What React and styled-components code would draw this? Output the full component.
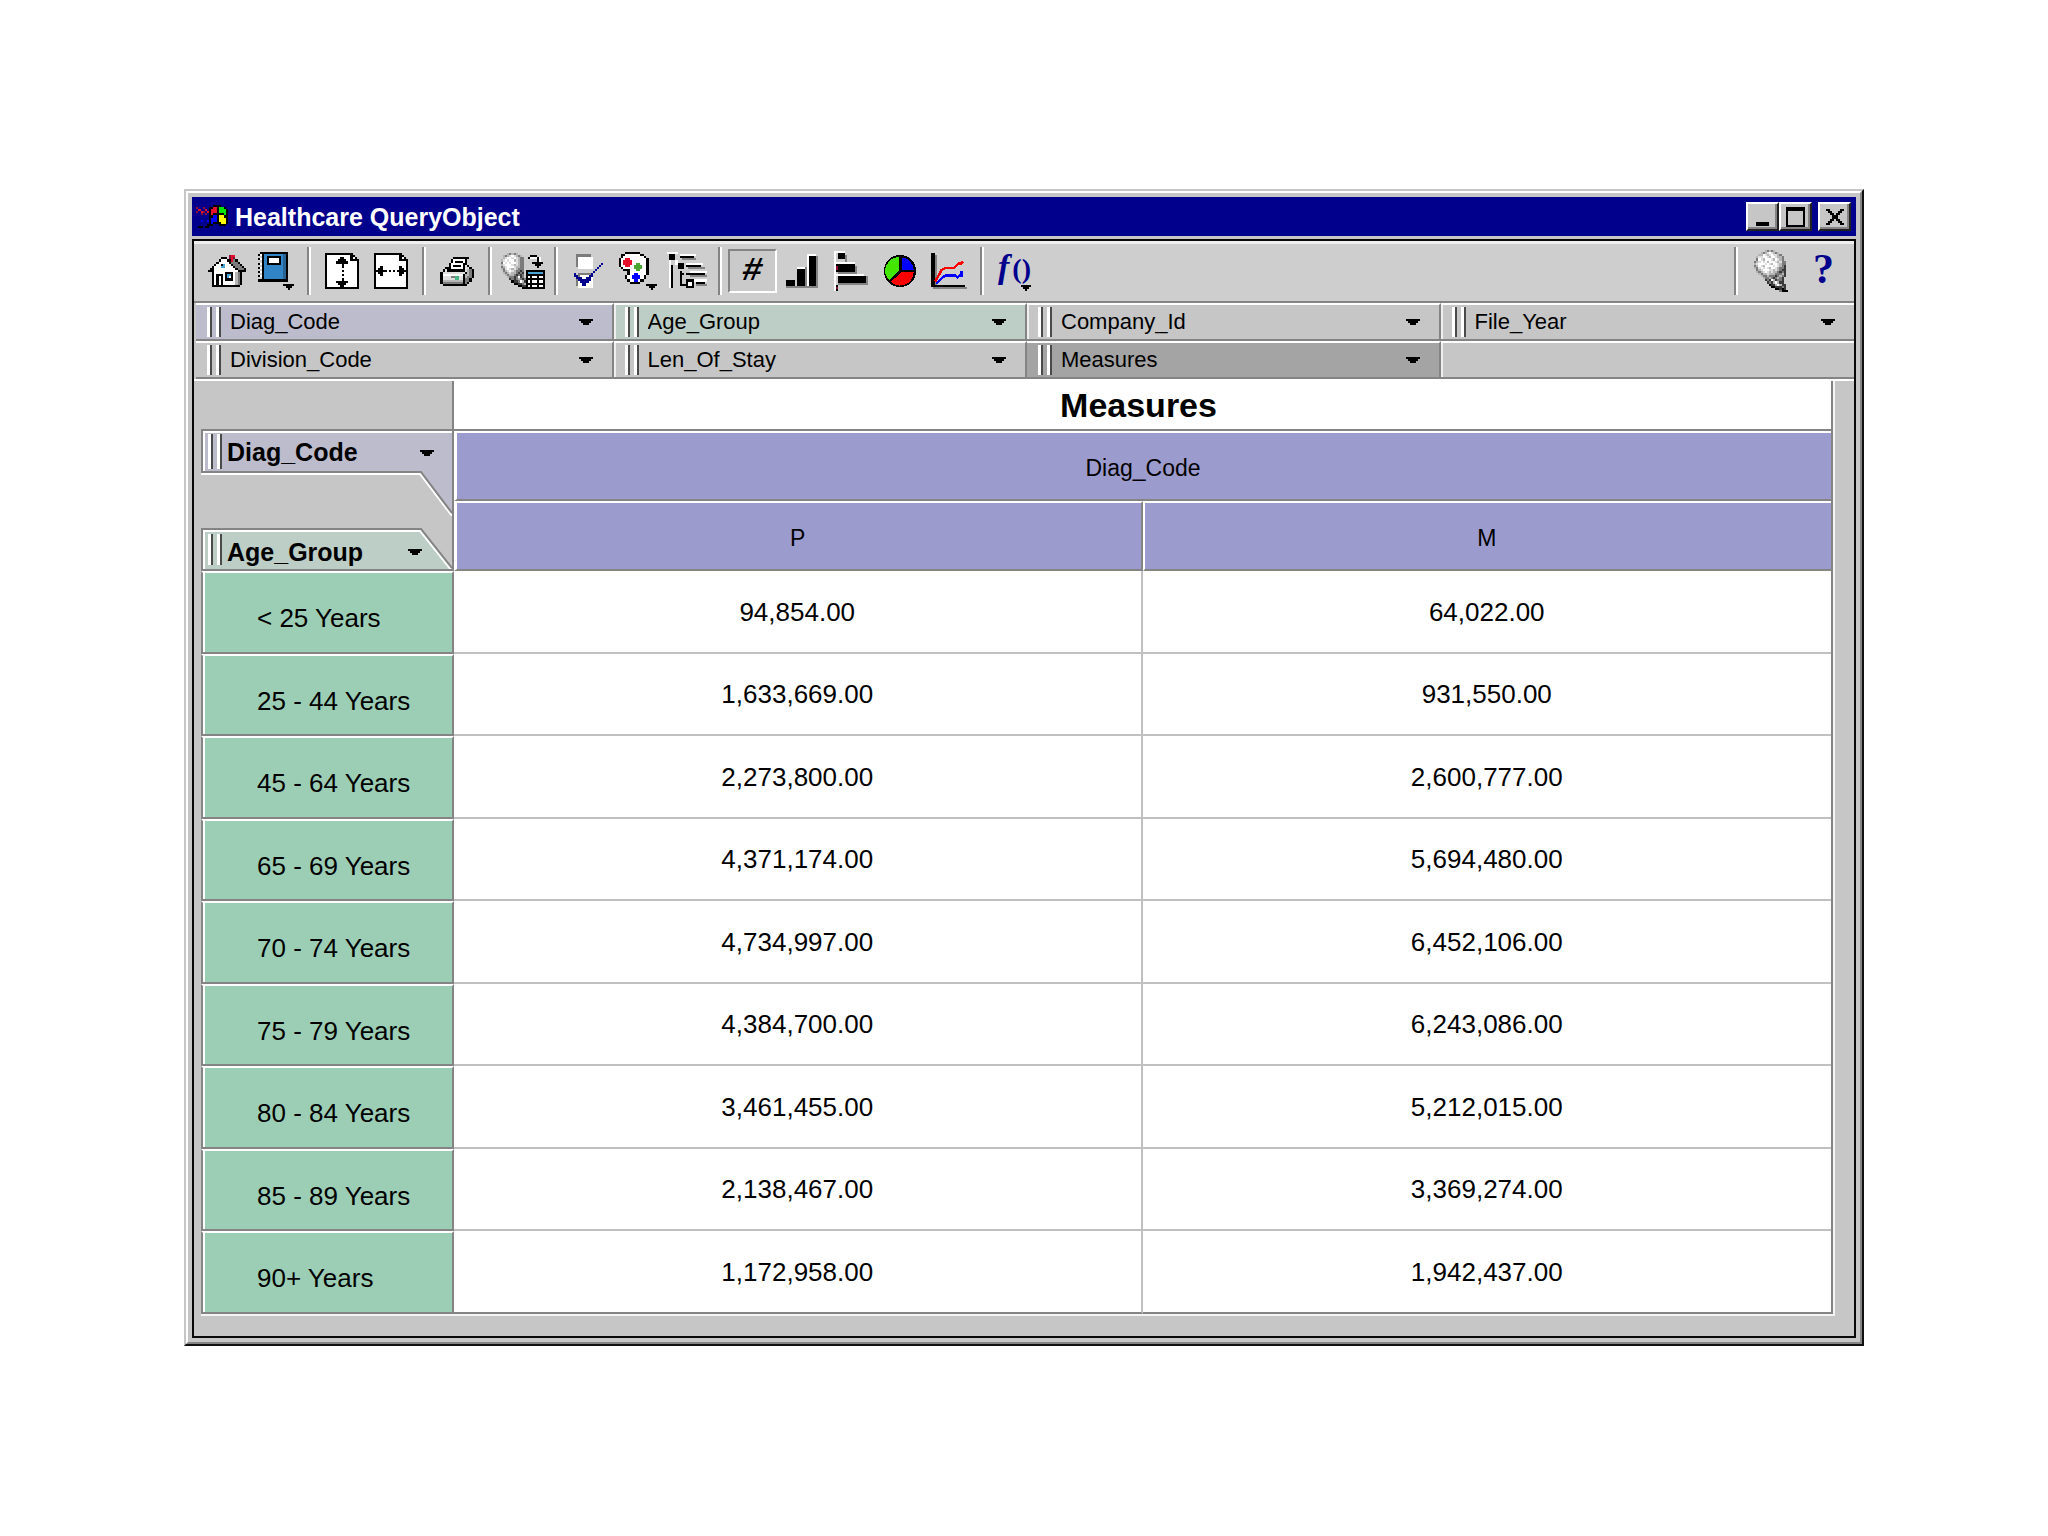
import React, { useState } from 'react';
import styled, { createGlobalStyle, css } from 'styled-components';

const GlobalStyle = createGlobalStyle`
  *, *::before, *::after {
    box-sizing: border-box;
  }

  body {
    margin: 0;
    background: #ffffff;
    color: #000000;
    font-family: "Liberation Sans", Arial, sans-serif;
  }

  button, select {
    font: inherit;
    color: inherit;
  }
`;

const face = '#c6c6c6';
const shadow = '#848484';
const navy = '#00008c';

const Page = styled.div`
  min-height: 100vh;
  padding: 189px 184px;
`;

// Window frame
const Window = styled.main`
  border: 2px solid;
  border-color: ${face} #101010 #101010 ${face};
`;

const Bevel = styled.div`
  border: 2px solid;
  border-color: #ffffff ${shadow} ${shadow} #ffffff;
  padding: 4px;
  background: ${face};
`;

const TitleBar = styled.header`
  display: flex;
  align-items: center;
  height: 39px;
  padding: 0 5px 0 4px;
  background: ${navy};
  color: #ffffff;
`;

const Title = styled.h1`
  flex: 1;
  margin: 0 0 0 7px;
  font-size: 25px;
  line-height: 30px;
  font-weight: bold;
`;

const WindowButton = styled.button`
  display: flex;
  align-items: center;
  justify-content: center;
  width: 33px;
  height: 29px;
  padding: 0;
  border: 2px solid;
  border-color: #ffffff #202020 #202020 #ffffff;
  background: ${face};
  box-shadow: inset -2px -2px 0 ${shadow};
  margin-left: ${props => (props.$apart ? 6 : 0)}px;
`;

const Client = styled.div`
  margin-top: 3px;
  border: 2px solid #080808;
  background: ${face};
`;

// Toolbar
const Toolbar = styled.div`
  display: flex;
  align-items: center;
  height: 62px;
  padding: 0 4px 0 8px;
  background: #cecece;
  border-bottom: 2px solid ${shadow};
  box-shadow: inset 0 3px 0 #efefef;
`;

const ToolButton = styled.button`
  display: flex;
  align-items: center;
  justify-content: center;
  width: ${props => (props.$wide ? 53 : 49)}px;
  height: 44px;
  padding: 0;
  border: 0;
  background: none;

  ${props => props.$pressed && css`
    border: 2px solid;
    border-color: ${shadow} #ffffff #ffffff ${shadow};
    background: #cacaca;
  `}
`;

const Separator = styled.span`
  width: 4px;
  height: 48px;
  margin: 0 6px 0 7px;
  border-left: 2px solid ${shadow};
  border-right: 2px solid #ffffff;
`;

const Spacer = styled.span`
  flex: 1;
`;

const Glyph = styled.span`
  position: relative;
  padding-bottom: ${props => props.$lift || 0}px;
  font-family: ${props => (props.$serif ? '"Liberation Serif", serif' : '"Liberation Mono", monospace')};
  font-style: ${props => (props.$italic ? 'italic' : 'normal')};
  font-size: ${props => props.$size}px;
  line-height: 36px;
  font-weight: bold;
  color: ${props => props.$color || '#000000'};

  svg {
    position: absolute;
    right: 0;
    bottom: 0;
  }
`;

const Parens = styled.span`
  font-size: 28px;
  font-style: normal;
  margin-left: 3px;
`;

// Dimension bar
const DimensionBar = styled.div`
  display: grid;
  grid-template-columns: calc(25% + 3px) repeat(3, 1fr);
  padding-left: 2px;
`;

const tints = {
  lavender: '#bdbccd',
  mint: '#bccec5',
  dark: '#a4a4a4',
  plain: face,
};

const Dimension = styled.div`
  display: flex;
  align-items: center;
  height: 38px;
  padding: 0 19px 0 10px;
  border-top: 2px solid #ffffff;
  border-bottom: 2px solid ${shadow};
  border-right: ${props => (props.$last ? 0 : 2)}px solid ${shadow};
  background: ${props => tints[props.$tint]};

  &:not(:nth-child(4n + 1)) {
    box-shadow: ${props => (props.$tint === 'dark' ? 'none' : 'inset 2px 0 0 #efefef')};
  }
`;

const Grip = styled.span`
  flex: none;
  width: 15px;
  height: ${props => props.$height}px;
  padding-left: 1px;
  display: flex;
  gap: 4px;

  &::before, &::after {
    content: '';
    width: 5px;
    border-left: 3px solid #ffffff;
    border-right: 2px solid #4a4a4a;
  }
`;

const Select = styled.select`
  flex: 1;
  min-width: 0;
  appearance: none;
  margin: 0;
  padding: 0;
  border: 0;
  border-radius: 0;
  background: transparent;
  font-size: ${props => (props.$bold ? 25 : 22)}px;
  font-weight: ${props => (props.$bold ? 'bold' : 'normal')};
  line-height: 30px;
  height: 30px;
  margin-left: ${props => (props.$bold ? 5 : 9)}px;
`;

// Query table
const Body = styled.div`
  padding: 0 19px 20px 7px;
  border-top: 2px solid #ffffff;
`;

const TableEdge = styled.div`
  border-right: 2px solid #f4f4f4;
  border-bottom: 2px solid #f4f4f4;
`;

const Table = styled.table`
  width: 100%;
  table-layout: fixed;
  border-spacing: 0;
  border-right: 2px solid ${shadow};
`;

const LabelCol = styled.col`
  width: 253px;
`;

const Corner = styled.td`
  padding: 0;
  border-right: 2px solid ${shadow};
  border-bottom: ${props => (props.$lined ? 2 : 0)}px solid ${shadow};
  background: ${face};
  vertical-align: top;
`;

const TableTitle = styled.th`
  height: 50px;
  padding: 0 8px 0 0;
  border-bottom: 2px solid ${shadow};
  background: #ffffff;
  font-size: 34px;
  line-height: 40px;
  font-weight: bold;
`;

const ColumnHeader = styled.th`
  height: 70px;
  padding: 4px 2px 0 0;
  border-top: 2px solid #ffffff;
  border-left: ${props => (props.$second ? 2 : 3)}px solid #ffffff;
  border-bottom: 2px solid ${shadow};
  border-right: ${props => (props.$divided ? 2 : 0)}px solid ${shadow};
  background: #9c9bce;
  font-size: 23px;
  line-height: 30px;
  font-weight: normal;
`;

const RowHeader = styled.th`
  padding: 11px 0 0 54px;
  border: 2px solid ${shadow};
  border-top-color: #ffffff;
  background: #9cceb5;
  box-shadow: inset 2px 0 0 #ffffff;
  font-size: 26px;
  line-height: 30px;
  font-weight: normal;
  text-align: left;
`;

const Value = styled.td`
  padding: 0;
  border-bottom: 2px solid #c0c0c0;
  background: #ffffff;
  font-size: 26px;
  line-height: 30px;
  text-align: center;

  &:not(:last-child) {
    border-right: 2px solid #c0c0c0;
  }
`;

const Row = styled.tr`
  height: 82px;

  &:nth-child(odd) {
    height: 83px;
  }

  &:last-child ${Value} {
    border-bottom-color: ${shadow};
  }
`;

const Tabs = styled.div`
  display: flex;
  flex-direction: column;
  justify-content: space-between;
  height: 140px;
`;

const Tab = styled.div`
  position: relative;
  display: flex;
  align-items: flex-start;
  height: ${props => props.$height}px;
  padding: ${props => props.$top}px ${props => props.$right}px 0 6px;

  & > * {
    position: relative;
  }

  ${Select} {
    height: 36px;
    line-height: 36px;
  }
`;

const TabShape = styled.svg`
  && {
    position: absolute;
    left: 0;
    top: 0;
  }
`;

const ArrowSvg = styled.svg`
  flex: none;
  pointer-events: none;
  margin-top: ${props => props.$top || 0}px;
`;

const Arrow = ({ top }) => (
  <ArrowSvg $top={top} width="14" height="7" viewBox="0 0 14 7" shapeRendering="crispEdges" aria-hidden="true">
    <path d="M0 0h14v2h-2v2h-2v2h-6v-2h-2v-2h-2z" />
  </ArrowSvg>
);

// One unit of an icon's viewBox is one dot of the drawing, shown about two pixels wide
const Icon = ({ w, h, children }) => (
  <svg
    width={Math.round(w * 2.1)}
    height={Math.round(h * 2.1)}
    viewBox={`0 0 ${w} ${h}`}
    shapeRendering="crispEdges"
    aria-hidden="true"
  >
    {children}
  </svg>
);

const palette = {
  K: '#000000',
  W: '#ffffff',
  G: '#7b7b7b',
  L: '#b5b5b5',
  R: '#e6102a',
  C: '#4aa5d6',
  B: '#0000ff',
  N: '#00008c',
  E: '#00e600',
  F: '#4aa531',
  Y: '#ffff00',
  T: '#4ab584',
  M: '#8c1038',
  D: '#3a3a3a',
  S: '#dedede',
};

const PixelIcon = ({ rows }) => (
  <Icon w={rows[0].length} h={rows.length}>
    {rows.flatMap((row, y) =>
      [...row].map((dot, x) =>
        palette[dot] ? <rect key={`${x}-${y}`} x={x} y={y} width="1" height="1" fill={palette[dot]} /> : null
      )
    )}
  </Icon>
);

const logo = [
  '........KKKK...',
  'M..M..KKRRKEEK.',
  '.R..R.KRRRKEEEK',
  'M.RM.RKRRRKEEEK',
  '..M.M.KRKKKKKEK',
  'N.....KKBBKYYKK',
  '.N.NN.KBBBKYYYK',
  'N.BN.BKBBBKYYYK',
  '.N.NN.KBKKKKYYK',
  'N.N.NKKK...KKK.',
  '.KK.KK.........',
];

const house = [
  '..........MRR.....',
  '......KKK.MRM.....',
  '.....KWWWKKRGK....',
  '....KWWWWWKGGGK...',
  '...KWWKCWWWKGGGK..',
  '..KWWWCCWWWWKGGGK.',
  '.KKWWWWWWWWWWKGGGK',
  'KKKWWWWWWWWWWWKKKK',
  '..KWWWWWKKKKWLGK..',
  '..KWKKKWKCCKWLGK..',
  '..KWKWKWKCWKWLGK..',
  '..KWKWKWKKKKWLGK..',
  '..KWKWKWWWWWWLGK..',
  '..KWKWKWWWWWWLGK..',
  '..KKKKKKKKKKKKK...',
];

const printer = [
  '......KKKKKKKK..',
  '.....KWWWWWWK...',
  '.....KWKKKKWK...',
  '....KWWWWWWKK...',
  '....KWKKKKWKSK..',
  '..KKKWWWWWWKSSK.',
  '.KSKKKKKKKKKSLGK',
  'KSSSSSSSSSSSKLGK',
  'KWWWWWWWWWWKLLGK',
  'KSSSSGGTTSSKLGGK',
  'KSSSSSSTTSSKGGK.',
  'KLLLLLLLLLLKGGK.',
  'KGGGGGGGGGGKGK..',
  '.KKKKKKKKKKKK...',
];

const lamp = [
  '.....LGLGL......',
  '...LGLSWSLGL....',
  '..LLWSLSWSSLG...',
  '.LSSWWSLWWSLLG..',
  '.GWSLWWWSLWSLG..',
  'GLSWSWLWWWSLSGG.',
  'LSWWWSWSLWWSLGG.',
  'GLWSLWWWWSWSLGD.',
  'LGSWSWSLWWSLGGD.',
  '.GLSWWWSSLSLGDD.',
  '.LGLSWSLSLLGDGD.',
  '..LGLLSLLLGGGLD.',
  '...LGGLGGGDGLGD.',
  '....LGGLGDGLGD..',
  '.....DGDWLDGGD..',
  '......DGDLWLDD..',
  '.......KDDLWLDD.',
  '........KKDDDGD.',
  '..........KKDKD.',
  '............GKKK',
];

const lens = [
  '...LGLGL.............',
  '.LGLSWSLGL....KKK....',
  '.LSWWSWSLGG..KWWWKW..',
  'LSWSWWLSLGG......KW..',
  'GWSWSWWSLGG....KKKKK.',
  'LSWWWSLSLGG.....KKK..',
  'GLSWWWSLLGG......K...',
  'LGSWSLSLGGG..........',
  '.GLSWSLGGDG.KKKKKKKKK',
  '.LGLSLLGDGD.KCCCCCCCK',
  '..LGLLGDGDG.KKKKKKKKK',
  '...LGGDGWDG.KWKWWKWWK',
  '....DGDGLGDGKKKKKKKKK',
  '.....KDDGWLDKWKWWKWWK',
  '......KKDDGLKKKKKKKKK',
  '........KKDDKWKWWKWWK',
  '..........KKKKKKKKKKK',
];

const checks = [
  '.GGGGGGG......',
  '.GWWWWWWW.....',
  '.GWWWWWWW.....',
  '.GWWWWWWW.....',
  '.GWWWWWWW....N',
  '.GWWWWWWW...N.',
  '..WWWWWWW..N..',
  '..........N...',
  '.........N....',
  'N.GGGGGGN.....',
  'NNGWWWWNN.....',
  '.NNNWWNNW.....',
  '.GNNNNNNW.....',
  '.GWNNNNWW.....',
  '.GWWNNWWW.....',
  '..WWWWWWW.....',
];

const paint = [
  '...KKKKKKK........',
  '.KKWWWWWWWKK......',
  '.KWWWWWWWWWWK.....',
  'KWWRRWWWWWWWWK....',
  'KWRRRRWWWWWWWK....',
  'KWRRRRWWFFWWWK....',
  'KWWRRWWFFFFWWK....',
  '.KWWWWWFFFFWWK....',
  '..KKKWWWFFWWWK....',
  '....KWWWWWWWWK....',
  '....KWWBBWWWWK....',
  '...KWWBBBBWWK.....',
  '...KWWBBBBWWK.....',
  '....KWWBBWKK......',
  '.....KKKKK........',
  '.............KKKKK',
  '..............KKK.',
  '...............K..',
];

const DropMark = ({ x, y }) => <path d={`M${x} ${y}h5v1h-1v1h-1v1h-1v-1h-1v-1h-1z`} />;

const Book = () => (
  <Icon w={17} h={18}>
    <path d="M2 0h12v14h-12z" />
    <path d="M3 1h9v12h-9z" fill="#3184c6" />
    <path d="M12 1h1v12h-1z" fill="#296394" />
    <path d="M4 2h7v4h-7z" />
    <path d="M5 3h5v2h-5z" fill="#ffffff" />
    <path d="M0 1h1v1h-1zM1 0h1v1h-1zM0 3h1v1h-1zM0 5h1v1h-1zM0 7h1v1h-1zM0 9h1v1h-1zM0 11h1v1h-1zM0 13h2v1h-2z" />
    <path d="M1 1h1v1h-1zM1 3h1v1h-1zM1 5h1v1h-1zM1 7h1v1h-1zM1 9h1v1h-1zM1 11h1v1h-1z" fill="#ffffff" />
    <DropMark x={12} y={15} />
  </Icon>
);

const Sheet = ({ children }) => (
  <Icon w={16} h={17}>
    <path d="M0 0h13v1h1v1h1v1h1v14h-16z" />
    <path d="M1 1h11v3h3v12h-14z" fill="#ffffff" />
    <path d="M13 2h1v1h-1z" fill="#ffffff" />
    {children}
  </Icon>
);

const FitHeight = () => (
  <Sheet>
    <path d="M7 2h2v1h1v1h1v1h-2v2h-1v-2h-3v-1h1v-1h1zM8 8h1v1h-1zM8 10h1v1h-1zM8 12h1v1h2v1h-1v1h-1v1h-2v-1h-1v-1h-1v-1h3z" />
  </Sheet>
);

const FitWidth = () => (
  <Sheet>
    <path d="M1 8h1v-1h1v-1h1v2h2v1h-2v2h-1v-1h-1v-1h-1zM7 8h1v1h-1zM9 8h1v1h-1zM11 8h1v-2h1v1h1v1h1v1h-1v1h-1v1h-1v-2h-1z" />
  </Sheet>
);

const Tree = () => (
  <Icon w={19} h={18}>
    <path d="M0 0h5v1h-5zM1 1h1v16h-1zM4 4h1v2h-1zM6 1h8v1h-8zM9 5h8v1h-8zM11 9h8v1h-8zM13 13h6v1h-6z" fill="#ffffff" />
    <path d="M7 3h7v1h-7zM10 7h8v1h-8zM11 11h8v1h-8zM14 15h5v1h-5z" fill={shadow} />
    <path d="M1 1h3v3h-3zM5 5h3v3h-3zM9 13h4v4h-4zM6 2h7v1h-7zM9 6h7v1h-7zM9 10h9v1h-9zM14 14h4v1h-4zM2 6h1v11h-1zM6 9h1v6h2v1h-3zM6 10h2v1h-2z" />
    <path d="M10 14h2v2h-2z" fill="#ffffff" />
  </Icon>
);

const Columns = () => (
  <Icon w={15} h={16}>
    <path d="M0 12h4v4h-4zM5 6h4v10h-4zM10 0h4v16h-4z" fill="#ffffff" />
    <path d="M3 12h1v4h-1zM9 6h1v10h-1zM14 1h1v15h-1zM0 15h15v1h-15z" fill={shadow} />
    <path d="M0 12h4v3h-4zM5 7h4v8h-4zM11 1h3v14h-3z" />
  </Icon>
);

const Bars = () => (
  <Icon w={16} h={19}>
    <path d="M0 0h1v19h-1zM1 0h4v1h-4zM1 5h9v1h-9zM1 11h13v1h-13z" fill="#ffffff" />
    <path d="M5 2h1v3h-1zM10 7h1v4h-1zM2 10h8v1h-8zM15 12h1v4h-1zM2 15h13v1h-13z" fill={shadow} />
    <path d="M2 1h3v3h-3zM2 6h8v4h-8zM2 12h13v3h-13zM1 6h1v4h-1zM1 16h1v3h-1z" />
    <path d="M1 7h1v2h-1zM1 17h1v1h-1z" fill="#8c1038" />
  </Icon>
);

const Pie = () => (
  <Icon w={15} h={15}>
    <circle cx="7.5" cy="7.5" r="7.5" />
    <path d="M7 1v6.5l-4.6 4.3a6.4 6.4 0 0 1 4.6-10.8z" fill="#42e600" />
    <path d="M8.3 1.1a6.4 6.4 0 0 1 5.6 5.9h-5.6z" fill="#0000ff" />
    <path d="M8 8.2h5.9a6.4 6.4 0 0 1-10.7 4.4z" fill="#ff0000" />
  </Icon>
);

const Lines = () => (
  <Icon w={17} h={17}>
    <path d="M2 1h1v14h-1zM1 16h16v1h-16z" fill={shadow} />
    <path d="M0 0h2v15h14v1h-16z" />
    <path d="M2 13.5l3-5.5l2-1h4l2-2h1l1-1" fill="none" stroke="#ff0000" strokeWidth="1.2" />
    <path d="M2.5 14.5l3-3l2-1h4l1 1l1-1h1v-2" fill="none" stroke="#0000ff" strokeWidth="1.2" />
  </Icon>
);

const MarkOnly = () => (
  <Icon w={5} h={4}>
    <DropMark x={0} y={0} />
  </Icon>
);

const dimensions = [
  { name: 'Diag_Code', tint: 'lavender' },
  { name: 'Age_Group', tint: 'mint' },
  { name: 'Company_Id', tint: 'plain' },
  { name: 'File_Year', tint: 'plain', last: true },
  { name: 'Division_Code', tint: 'plain' },
  { name: 'Len_Of_Stay', tint: 'plain' },
  { name: 'Measures', tint: 'dark' },
];

const rows = [
  ['< 25 Years', '94,854.00', '64,022.00'],
  ['25 - 44 Years', '1,633,669.00', '931,550.00'],
  ['45 - 64 Years', '2,273,800.00', '2,600,777.00'],
  ['65 - 69 Years', '4,371,174.00', '5,694,480.00'],
  ['70 - 74 Years', '4,734,997.00', '6,452,106.00'],
  ['75 - 79 Years', '4,384,700.00', '6,243,086.00'],
  ['80 - 84 Years', '3,461,455.00', '5,212,015.00'],
  ['85 - 89 Years', '2,138,467.00', '3,369,274.00'],
  ['90+ Years', '1,172,958.00', '1,942,437.00'],
];

const tools = [
  { id: 'home', label: 'Home', icon: <PixelIcon rows={house} /> },
  { id: 'book', label: 'Reports', icon: <Book /> },
  null,
  { id: 'height', label: 'Fit height', icon: <FitHeight /> },
  { id: 'width', label: 'Fit width', icon: <FitWidth /> },
  null,
  { id: 'print', label: 'Print', icon: <PixelIcon rows={printer} /> },
  null,
  { id: 'refresh', label: 'Query data', icon: <PixelIcon rows={lens} /> },
  null,
  { id: 'select', label: 'Select items', icon: <PixelIcon rows={checks} /> },
  { id: 'colors', label: 'Colors', icon: <PixelIcon rows={paint} /> },
  { id: 'outline', label: 'Outline', icon: <Tree /> },
  null,
  { id: 'numbers', label: 'Numbers', icon: <Glyph $italic $size={34}>#</Glyph> },
  { id: 'columns', label: 'Column chart', icon: <Columns /> },
  { id: 'bars', label: 'Bar chart', icon: <Bars /> },
  { id: 'pie', label: 'Pie chart', icon: <Pie /> },
  { id: 'lines', label: 'Line chart', icon: <Lines /> },
  null,
  {
    id: 'formula',
    label: 'Formula',
    icon: (
      <Glyph $serif $italic $size={34} $lift={6} $color={navy}>
        f<Parens>()</Parens>
        <MarkOnly />
      </Glyph>
    ),
  },
];

const App = () => {
  const [view, setView] = useState('numbers');

  return (
    <Page>
      <GlobalStyle />
      <Window>
        <Bevel>
          <TitleBar>
            <PixelIcon rows={logo} />
            <Title>Healthcare QueryObject</Title>
            <WindowButton aria-label="Minimize">
              <svg width="22" height="20" viewBox="0 0 22 20" shapeRendering="crispEdges">
                <path d="M4 15h13v4h-13z" />
              </svg>
            </WindowButton>
            <WindowButton aria-label="Maximize">
              <svg width="22" height="20" viewBox="0 0 22 20" shapeRendering="crispEdges">
                <path d="M1 0h19v20h-19zM3 4v14h15v-14z" fillRule="evenodd" />
              </svg>
            </WindowButton>
            <WindowButton $apart aria-label="Close">
              <svg width="18" height="16" viewBox="0 0 9 8" shapeRendering="crispEdges">
                <path d="M0 0h2v1h1v1h1v1h1v-1h1v-1h1v-1h2v1h-1v1h-1v1h-1v2h1v1h1v1h1v1h-2v-1h-1v-1h-1v-1h-1v1h-1v1h-1v1h-2v-1h1v-1h1v-1h1v-2h-1v-1h-1v-1h-1z" />
              </svg>
            </WindowButton>
          </TitleBar>

          <Client>
            <Toolbar>
              {tools.map((tool, index) =>
                tool ? (
                  <ToolButton
                    key={tool.id}
                    aria-label={tool.label}
                    $pressed={view === tool.id}
                    onClick={() => setView(tool.id)}
                  >
                    {tool.icon}
                  </ToolButton>
                ) : (
                  <Separator key={index} />
                )
              )}
              <Spacer />
              <Separator />
              <ToolButton $wide aria-label="Search">
                <PixelIcon rows={lamp} />
              </ToolButton>
              <ToolButton $wide aria-label="Help">
                <Glyph $serif $size={42} $lift={5} $color={navy}>?</Glyph>
              </ToolButton>
            </Toolbar>

            <DimensionBar>
              {dimensions.map(({ name, tint, last }) => (
                <Dimension key={name} $tint={tint} $last={last}>
                  <Grip $height={30} />
                  <Select aria-label={name}>
                    <option>{name}</option>
                  </Select>
                  <Arrow />
                </Dimension>
              ))}
              <Dimension $tint="plain" $last />
            </DimensionBar>

            <Body>
              <TableEdge>
                <Table>
                  <colgroup>
                    <LabelCol />
                    <col />
                    <col />
                  </colgroup>
                  <thead>
                    <tr>
                      <Corner $lined />
                      <TableTitle colSpan={2}>Measures</TableTitle>
                    </tr>
                    <tr>
                      <Corner rowSpan={2}>
                        <Tabs>
                          <Tab $height={85} $top={3} $right={18}>
                            <TabShape width="251" height="85" viewBox="0 0 251 85" aria-hidden="true">
                              <path d="M0 0h251v83l-31-42h-220z" fill="#bdbccd" />
                              <path d="M0 1h251M3 0v40" stroke="#ffffff" strokeWidth="2" />
                              <path d="M0 43h219l32 42" fill="none" stroke="#ffffff" strokeWidth="2" />
                              <path d="M1 0v41h219l31 41" fill="none" stroke={shadow} strokeWidth="2" />
                            </TabShape>
                            <Grip $height={35} />
                            <Select $bold aria-label="Column dimension">
                              <option>Diag_Code</option>
                            </Select>
                            <Arrow top={16} />
                          </Tab>
                          <Tab $height={43} $top={6} $right={30}>
                            <TabShape width="251" height="43" viewBox="0 0 251 43" aria-hidden="true">
                              <path d="M0 0h220l31 40v3h-251z" fill="#bccec5" />
                              <path d="M3 43v-40h216l31 39" fill="none" stroke="#ffffff" strokeWidth="2" />
                              <path d="M1 43v-42h219l31 39M0 42h251" fill="none" stroke={shadow} strokeWidth="2" />
                            </TabShape>
                            <Grip $height={31} />
                            <Select $bold aria-label="Row dimension">
                              <option>Age_Group</option>
                            </Select>
                            <Arrow top={15} />
                          </Tab>
                        </Tabs>
                      </Corner>
                      <ColumnHeader colSpan={2}>Diag_Code</ColumnHeader>
                    </tr>
                    <tr>
                      <ColumnHeader $divided>P</ColumnHeader>
                      <ColumnHeader $second>M</ColumnHeader>
                    </tr>
                  </thead>
                  <tbody>
                    {rows.map(([age, p, m]) => (
                      <Row key={age}>
                        <RowHeader scope="row">{age}</RowHeader>
                        <Value>{p}</Value>
                        <Value>{m}</Value>
                      </Row>
                    ))}
                  </tbody>
                </Table>
              </TableEdge>
            </Body>
          </Client>
        </Bevel>
      </Window>
    </Page>
  );
};

export default App;
